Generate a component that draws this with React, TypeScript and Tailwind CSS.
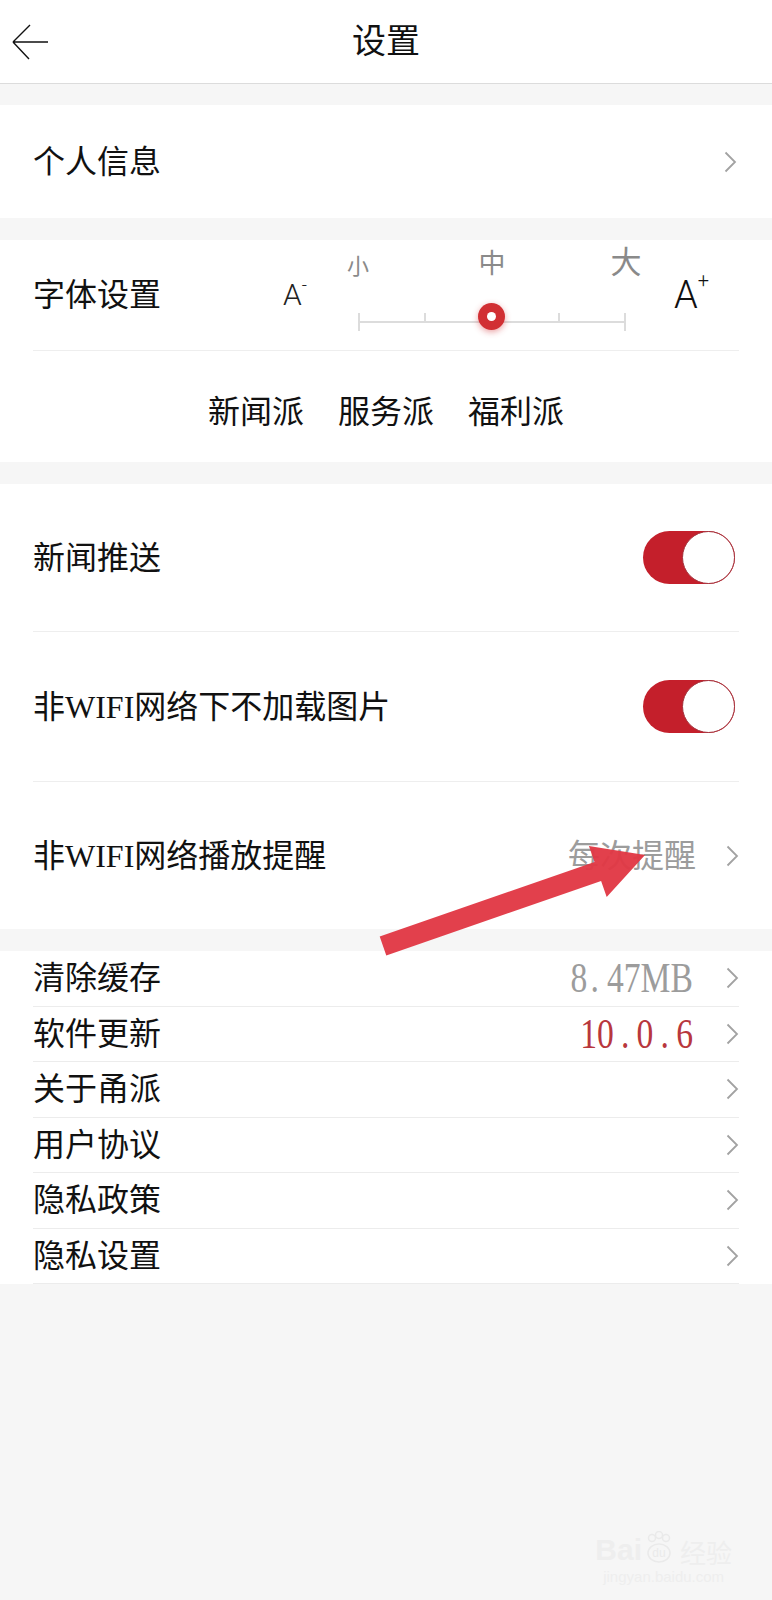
import React from 'react';

const serif = "font-['Liberation_Serif','Noto_Sans_CJK_SC',serif]";

function Chevron() {
  return (
    <svg width="13" height="22" viewBox="0 0 13 22" className="shrink-0">
      <path d="M1.5 1.5 L11 11 L1.5 20.5" fill="none" stroke="#a2a2a2" strokeWidth="1.8" />
    </svg>
  );
}

function Toggle() {
  return (
    <div className="relative w-[92px] h-[53px] rounded-full bg-[#c41f2b] shrink-0">
      <div className="absolute right-0 top-0 w-[53px] h-[53px] rounded-full bg-white border border-[#a3303a]" />
    </div>
  );
}

function ListRow({ label, value }: { label: string; value?: React.ReactNode }) {
  return (
    <div className="mx-[33px] h-[55.5px] border-b border-[#ececec] flex items-center">
      <span className="flex-1 text-[32px] leading-none text-[#111]">{label}</span>
      {value}
      <Chevron />
    </div>
  );
}

function FontSlider() {
  return (
    <div className="self-start pt-[5px] w-[268px] flex flex-col font-['Noto_Sans_CJK_SC',sans-serif] text-[#8a8a8a]">
      <div className="h-[30px] flex items-end justify-between">
        <div className="w-0 flex justify-center">
          <span className="text-[22px] leading-none whitespace-nowrap">小</span>
        </div>
        <div className="w-0 flex justify-center">
          <span className="text-[27px] leading-none whitespace-nowrap">中</span>
        </div>
        <div className="w-0 flex justify-center">
          <span className="text-[31px] leading-none whitespace-nowrap">大</span>
        </div>
      </div>
      <div className="relative mt-[38px] h-[18px]">
        <div className="absolute left-0 right-0 top-[8px] h-[2px] bg-[#dcdcdc]" />
        <div className="absolute left-0 top-0 w-[2px] h-[18px] bg-[#dcdcdc]" />
        <div className="absolute left-[66px] top-0 w-[2px] h-[9px] bg-[#dcdcdc]" />
        <div className="absolute left-[200px] top-0 w-[2px] h-[9px] bg-[#dcdcdc]" />
        <div className="absolute right-0 top-0 w-[2px] h-[18px] bg-[#dcdcdc]" />
        <div className="absolute left-[120px] top-[-10px] w-[27px] h-[27px] rounded-full bg-[#d12f33] shadow-[0_2px_6px_rgba(209,47,51,0.45)] flex items-center justify-center">
          <div className="w-[9px] h-[9px] rounded-full bg-white" />
        </div>
      </div>
    </div>
  );
}

export default function App() {
  return (
    <div className={`relative w-full min-h-[1600px] bg-[#f6f6f6] ${serif} text-[#111]`}>
      {/* header */}
      <div className="h-[84px] bg-white border-b border-[#dcdcdc] flex items-center">
        <div className="w-[80px] pl-[12px]">
          <svg width="38" height="38" viewBox="0 0 38 38">
            <path d="M1 19 H36 M1 19 L18 2 M1 19 L17 36" fill="none" stroke="#111" strokeWidth="1.4" />
          </svg>
        </div>
        <div className="flex-1 text-center text-[34px] leading-none">设置</div>
        <div className="w-[80px]" />
      </div>

      {/* personal info */}
      <div className="mt-[21px] bg-white h-[113px] px-[33px] pr-[35px] flex items-center">
        <span className="flex-1 text-[32px] leading-none">个人信息</span>
        <Chevron />
      </div>

      {/* font settings */}
      <div className="mt-[22px] bg-white">
        <div className="mx-[33px] h-[111px] border-b border-[#eeeeee] flex items-center">
          <span className="w-[250px] text-[32px] leading-none">字体设置</span>
          <div className="w-[75px] font-['Roboto',sans-serif] font-light text-[30px] leading-none text-[#222]">
            A<span className="text-[18px] align-top relative top-[-4px]">-</span>
          </div>
          <FontSlider />
          <div className="ml-[48px] font-['Roboto',sans-serif] font-light text-[38px] leading-none text-[#111]">
            A<span className="text-[20px] align-top relative top-[-6px]">+</span>
          </div>
        </div>
        <div className="h-[111px] flex items-center justify-center gap-[34px] pt-[10px] text-[32px] leading-none">
          <span>新闻派</span>
          <span>服务派</span>
          <span>福利派</span>
        </div>
      </div>

      {/* toggles */}
      <div className="mt-[22px] bg-white">
        <div className="mx-[33px] h-[148px] border-b border-[#eeeeee] flex items-center pr-[4px]">
          <span className="flex-1 text-[32px] leading-none">新闻推送</span>
          <Toggle />
        </div>
        <div className="mx-[33px] h-[150px] border-b border-[#eeeeee] flex items-center pr-[4px]">
          <span className="flex-1 text-[32px] leading-none">非WIFI网络下不加载图片</span>
          <Toggle />
        </div>
        <div className="mx-[33px] h-[147px] flex items-center">
          <span className="flex-1 text-[32px] leading-none">非WIFI网络播放提醒</span>
          <span className="text-[32px] leading-none text-[#9c9c9c] mr-[30px]">每次提醒</span>
          <Chevron />
        </div>
      </div>

      {/* list */}
      <div className="mt-[22px] bg-white">
        <ListRow
          label="清除缓存"
          value={
            <span className="inline-block text-[42px] leading-none text-[#9c9c9c] scale-x-[0.8] origin-right mr-[33px]">
              8<span className="ml-[4px] mr-[10px]">.</span>47MB
            </span>
          }
        />
        <ListRow
          label="软件更新"
          value={
            <span className="inline-block text-[42px] leading-none text-[#b8373d] scale-x-[0.8] origin-right mr-[33px]">
              10<span className="mx-[9px]">.</span>0<span className="mx-[9px]">.</span>6
            </span>
          }
        />
        <ListRow label="关于甬派" />
        <ListRow label="用户协议" />
        <ListRow label="隐私政策" />
        <ListRow label="隐私设置" />
      </div>

      {/* annotation arrow */}
      <svg
        className="absolute left-0 top-0 pointer-events-none"
        width="772"
        height="1000"
        viewBox="0 0 772 1000"
      >
        <polygon
          points="379.7,936.6 594.5,862 588.9,845.9 645,855 606.7,896.9 601.1,880.9 386.3,955.4"
          fill="#e13845"
          opacity="0.96"
        />
      </svg>

      {/* watermark */}
      <div className="absolute right-[40px] bottom-[16px] flex flex-col items-center text-[#eeeeee] font-['Liberation_Sans',sans-serif] select-none">
        <div className="flex items-end gap-[2px]">
          <span className="text-[30px] font-bold leading-none">Bai</span>
          <svg width="30" height="34" viewBox="0 0 30 34">
            <g fill="none" stroke="#eaeaea" strokeWidth="1.5">
              <circle cx="8" cy="7" r="3.5" />
              <circle cx="15" cy="4" r="3.5" />
              <circle cx="22" cy="7" r="3.5" />
              <ellipse cx="15" cy="22" rx="11" ry="9" />
            </g>
            <text x="15" y="26" textAnchor="middle" fontSize="12" fill="#eaeaea" fontFamily="Liberation Sans">du</text>
          </svg>
          <span className="text-[26px] leading-none font-['Noto_Sans_CJK_SC',sans-serif] ml-[4px]">经验</span>
        </div>
        <span className="text-[15px] leading-none mt-[4px]">jingyan.baidu.com</span>
      </div>
    </div>
  );
}
